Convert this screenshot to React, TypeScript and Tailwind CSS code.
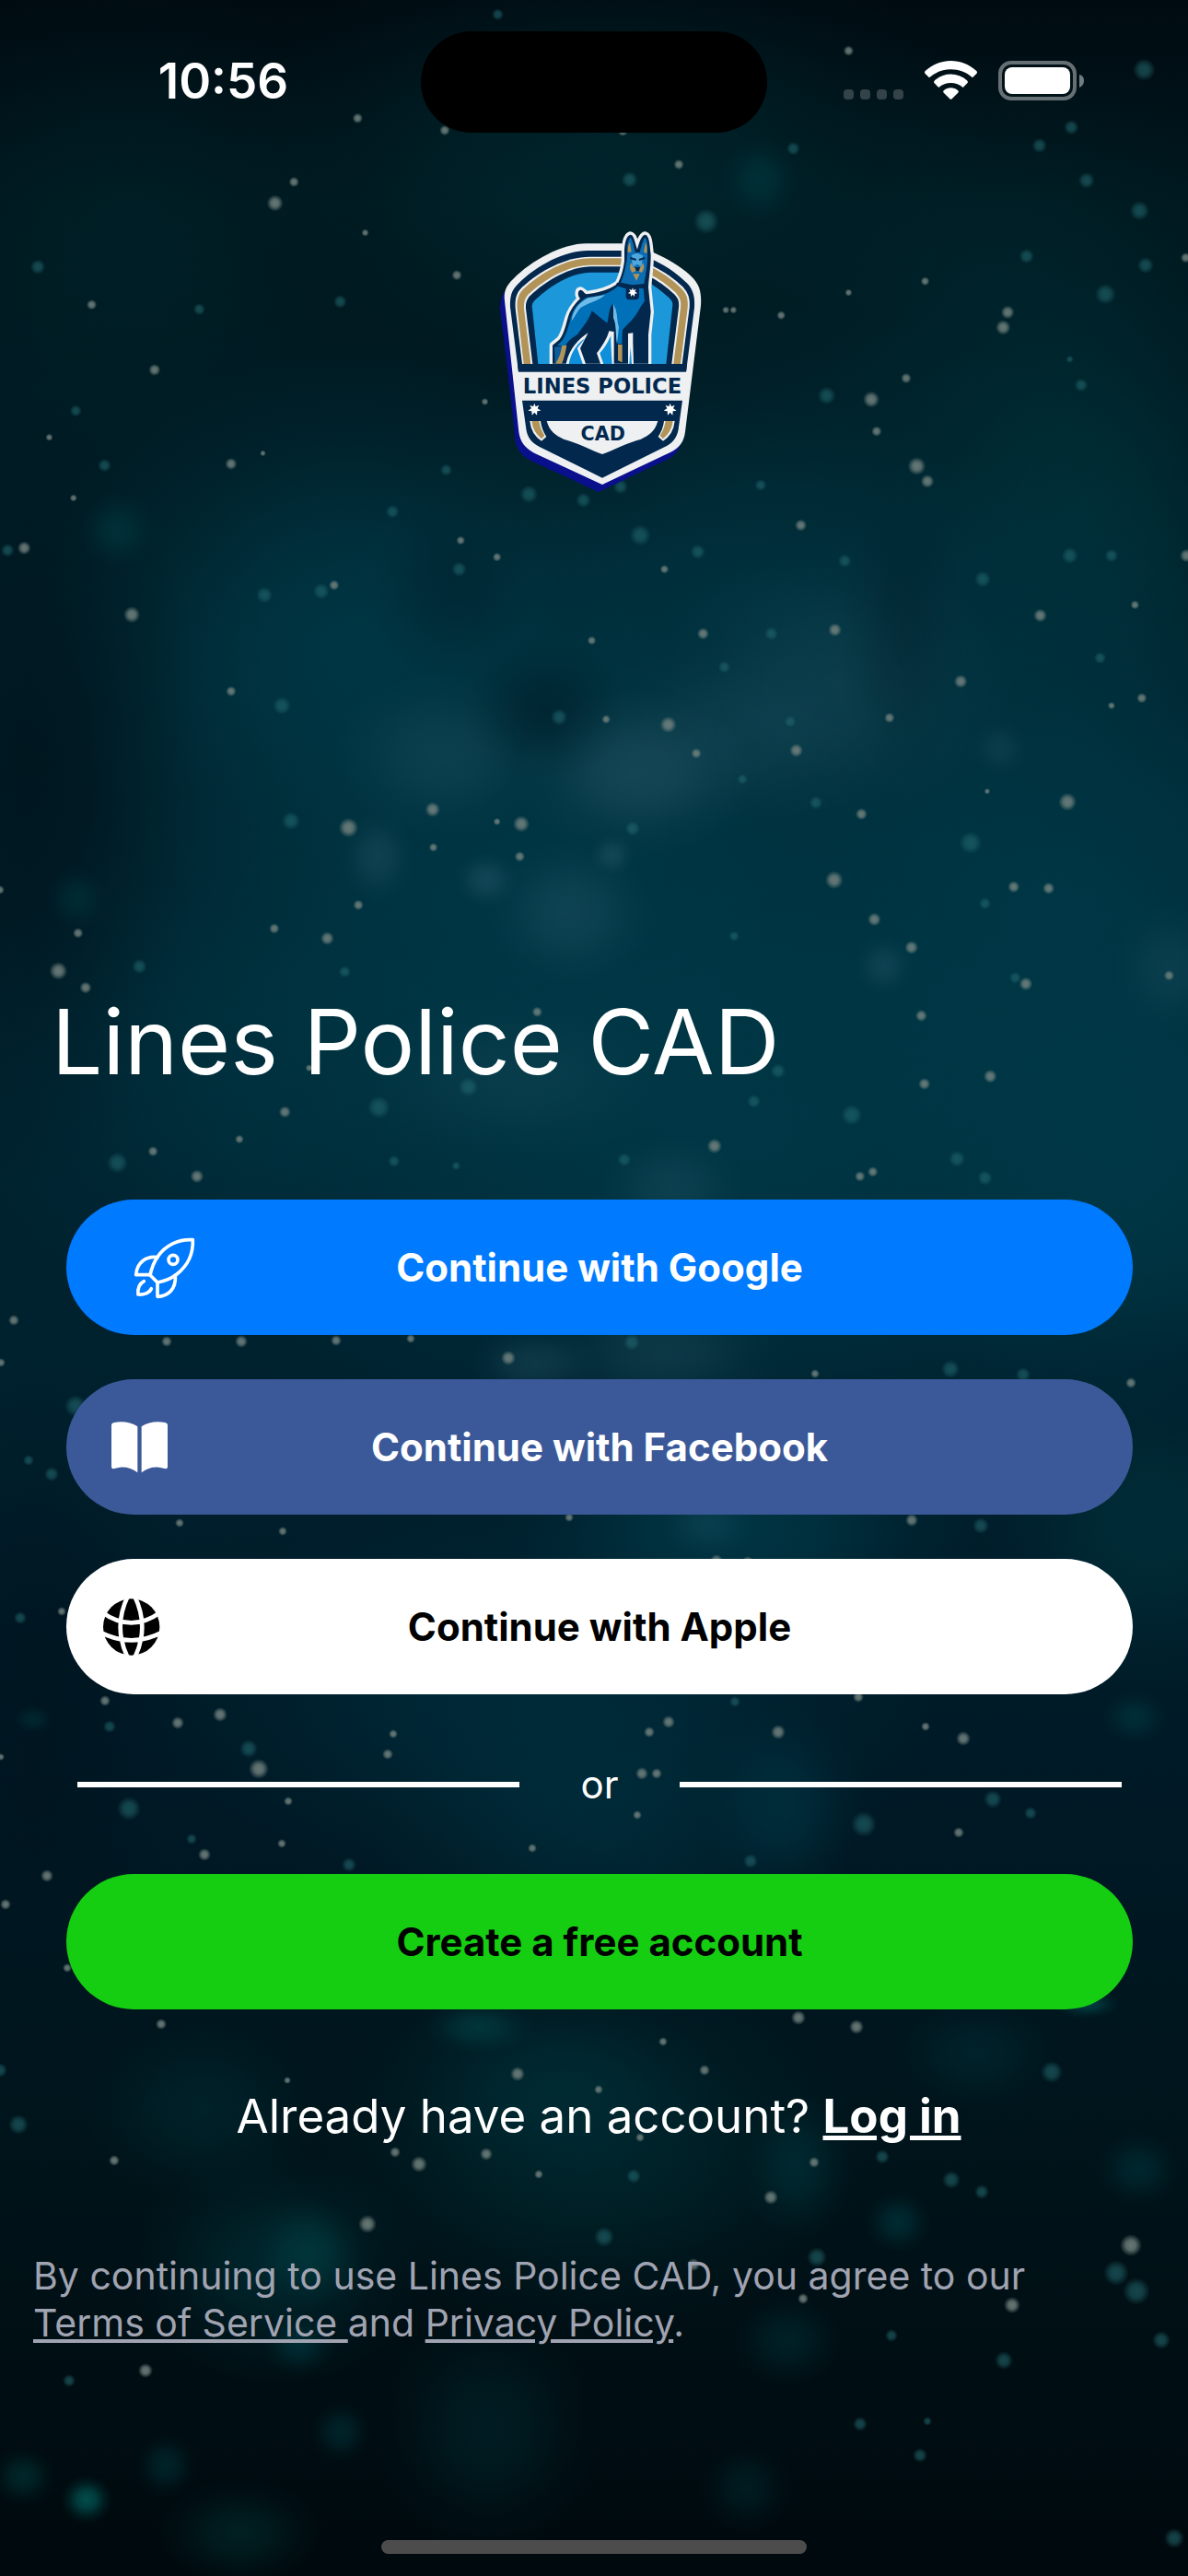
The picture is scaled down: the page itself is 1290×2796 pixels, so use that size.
import type { ReactNode } from "react";

type Blob = [x: number, y: number, rx: number, ry: number, tone: string, opacity: number];
type Star = [x: number, y: number, r: number, tone?: "t" | "w"];

/* Soft clouds of the night sky, in a 1290 x 2796 field. */
const clouds: Blob[] = [
  [660, 170, 420, 240, "teal", 0.4],
  [140, 230, 260, 260, "teal", 0.2],
  [1090, 330, 300, 280, "teal", 0.3],
  [380, 700, 340, 320, "blue", 0.8],
  [840, 660, 460, 330, "blue", 0.65],
  [1180, 560, 220, 260, "teal", 0.5],
  [1150, 980, 460, 480, "blue", 0.85],
  [600, 980, 560, 440, "blue", 0.85],
  [260, 1150, 340, 300, "blue", 0.45],
  [800, 1240, 660, 400, "blue", 0.8],
  [1230, 1250, 300, 320, "blue", 0.8],
  [910, 740, 190, 150, "mist", 0.25],
  [690, 840, 130, 90, "mist", 0.45],
  [790, 800, 180, 100, "mist", 0.22],
  [480, 820, 120, 90, "mist", 0.3],
  [410, 930, 40, 50, "mist", 0.35],
  [620, 990, 90, 80, "mist", 0.35],
  [528, 955, 34, 30, "mist", 0.45],
  [665, 928, 24, 22, "mist", 0.45],
  [960, 1048, 32, 32, "mist", 0.35],
  [560, 1170, 180, 90, "mist", 0.2],
  [730, 1290, 80, 60, "mist", 0.3],
  [580, 1480, 70, 40, "mist", 0.35],
  [720, 1470, 130, 70, "mist", 0.3],
  [770, 1655, 50, 35, "mist", 0.7],
  [800, 1660, 260, 140, "blue", 0.8],
  [1250, 1660, 180, 180, "teal", 0.5],
  [600, 1850, 420, 240, "blue", 0.5],
  [850, 1960, 90, 110, "blue", 0.5],
  [660, 2000, 260, 160, "blue", 0.35],
  [590, 770, 90, 80, "dark", 0.35],
  [980, 690, 70, 160, "dark", 0.25],
  [490, 640, 90, 100, "dark", 0.25],
  [30, 850, 190, 440, "dark", 0.6],
  [40, 1850, 160, 360, "dark", 0.5],
  [640, 2330, 300, 200, "teal", 0.45],
  [520, 2200, 60, 30, "glow", 0.5],
  [600, 2260, 180, 110, "teal", 0.35],
  [220, 2290, 130, 100, "teal", 0.35],
  [335, 2445, 60, 60, "glow", 0.5],
  [300, 2460, 160, 130, "teal", 0.5],
  [325, 2545, 40, 34, "teal", 0.6],
  [865, 2350, 60, 80, "teal", 0.5],
  [975, 2412, 36, 34, "teal", 0.6],
  [855, 2540, 60, 50, "teal", 0.4],
  [1236, 2354, 46, 40, "teal", 0.5],
  [1060, 2230, 90, 60, "teal", 0.35],
  [1180, 2175, 36, 16, "glow", 0.7],
  [530, 2640, 120, 130, "teal", 0.35],
  [370, 2640, 34, 34, "teal", 0.5],
  [180, 2676, 34, 36, "teal", 0.5],
  [25, 2688, 36, 32, "glow", 0.4],
  [94, 2713, 28, 26, "glow", 0.95],
  [260, 2750, 90, 60, "glow", 0.3],
  [810, 2700, 50, 50, "teal", 0.35],
  [128, 575, 42, 42, "teal", 0.6],
  [84, 975, 34, 34, "teal", 0.5],
  [825, 195, 42, 46, "teal", 0.6],
  [1086, 812, 30, 30, "mist", 0.25],
  [1270, 1050, 60, 70, "mist", 0.25],
  [36, 1866, 22, 16, "glow", 0.3],
  [1232, 1864, 36, 30, "teal", 0.6],
];

/* Stars of the upper half, plotted on a 1568-unit grid over 1290 px. */
const upperStars: Star[] = [
  [657, 19, 8, "t"], [1120, 67, 7], [472, 156, 7], [587, 172, 7], [822, 173, 7], [388, 240, 7], [363, 268, 11],
  [896, 217, 7], [1047, 196, 9, "t"], [1414, 168, 10, "t"], [1372, 192, 10, "t"], [1434, 238, 11, "t"],
  [1504, 278, 13, "t"], [1510, 92, 15, "t"], [1355, 338, 10, "t"], [1512, 350, 11, "t"], [1459, 388, 14, "t"],
  [1565, 340, 7], [1221, 371, 6], [1120, 386, 5], [1330, 412, 9], [1324, 432, 10], [1031, 416, 6], [958, 409, 5],
  [968, 409, 5], [603, 363, 7], [482, 307, 5], [449, 398, 9, "t"], [263, 408, 8, "t"], [121, 402, 7], [204, 488, 8],
  [50, 352, 10, "t"], [932, 292, 17, "t"], [831, 237, 11, "t"], [1196, 499, 7], [1091, 522, 12, "t"], [1150, 527, 11],
  [1157, 569, 7], [1210, 615, 12], [1224, 635, 9], [1427, 508, 9, "t"], [1412, 474, 5, "t"], [640, 530, 5],
  [1004, 640, 8, "t"], [1057, 693, 8], [305, 612, 8], [347, 598, 4], [97, 657, 5], [65, 577, 5], [100, 542, 8, "t"],
  [138, 614, 9, "t"], [589, 620, 8, "t"], [770, 660, 10, "t"], [819, 642, 10, "t"], [698, 652, 12, "t"],
  [518, 675, 9, "t"], [845, 706, 14, "t"], [921, 728, 10, "t"], [608, 713, 6], [606, 751, 10, "t"], [656, 735, 6],
  [877, 751, 6], [32, 723, 9], [10, 726, 9, "t"], [424, 780, 11, "t"], [441, 772, 7], [349, 785, 11, "t"],
  [174, 811, 11], [1115, 740, 9, "t"], [1297, 764, 11, "t"], [1412, 733, 11, "t"], [1467, 733, 9, "t"], [1566, 733, 9],
  [1498, 798, 6], [1373, 812, 9], [1102, 831, 9], [1018, 836, 9, "t"], [928, 836, 8], [781, 845, 6], [1452, 868, 8, "t"],
  [1268, 899, 9], [956, 880, 8, "t"], [1507, 921, 7], [1467, 931, 5], [1174, 947, 7], [1043, 952, 8, "t"],
  [882, 956, 11], [800, 949, 6], [738, 946, 11, "t"], [305, 912, 7], [372, 931, 12, "t"], [1051, 990, 9],
  [919, 994, 7], [980, 1028, 7, "t"], [1303, 1044, 4], [1409, 1058, 12], [1137, 1074, 8], [1077, 1059, 9, "t"],
  [1281, 1112, 15, "t"], [571, 1068, 10], [688, 1087, 11], [656, 1084, 5], [460, 1092, 13], [384, 1083, 12, "t"],
  [572, 1118, 6], [686, 1130, 7], [835, 1093, 10, "t"], [1101, 1161, 12], [1338, 1170, 8], [1384, 1172, 8],
  [1300, 1192, 8, "t"], [1154, 1213, 9], [1203, 1250, 9], [473, 1194, 7], [362, 1225, 7], [432, 1238, 9],
  [969, 1235, 7, "t"], [103, 1231, 7], [77, 1281, 12], [113, 1303, 8], [184, 1275, 10, "t"], [455, 1282, 8, "t"],
  [1354, 1298, 9], [1543, 1287, 7], [1216, 1340, 8], [1307, 1420, 9], [1220, 1430, 8], [709, 1335, 7], [408, 1409, 5],
  [1027, 1413, 10, "t"], [995, 1453, 9, "t"], [1124, 1471, 14, "t"], [618, 1434, 13, "t"], [376, 1467, 8],
  [500, 1461, 15, "t"], [943, 1512, 10], [824, 1530, 9, "t"], [202, 1519, 7], [316, 1503, 6], [260, 1552, 9],
  [520, 1532, 8, "t"], [602, 1538, 6, "t"], [1263, 1529, 11, "t"], [1152, 1546, 7], [1135, 1552, 7], [1300, 1554, 10, "t"],
  [155, 1534, 14, "t"], [1340, 1290, 8, "t"], [0, 1174, 6],
];

/* Stars of the lower half: full-page coordinates. */
const lowerStars: Star[] = [
  [15, 1433, 6], [1, 1479, 5], [181, 1456, 6], [262, 1456, 7], [365, 1455, 6], [446, 1453, 5], [552, 1474, 8],
  [686, 1457, 9, "t"], [885, 1491, 5], [1032, 1486, 10, "t"], [1111, 1492, 8, "t"], [1228, 1501, 6], [31, 1585, 6, "t"],
  [56, 1600, 8, "t"], [82, 1526, 12, "t"], [195, 1653, 5], [307, 1662, 5], [618, 1647, 5], [990, 1650, 7],
  [1065, 1656, 9, "t"], [778, 1694, 7], [812, 1695, 6], [67, 1749, 5], [22, 1756, 7, "t"], [114, 1846, 6],
  [119, 1874, 7, "t"], [193, 1870, 7], [239, 1861, 8], [270, 1898, 10, "t"], [281, 1920, 11], [427, 1882, 5],
  [421, 1904, 6], [726, 1869, 7], [705, 1880, 6], [845, 1880, 8], [932, 1842, 6], [798, 1847, 6, "t"],
  [1046, 1887, 8], [1005, 1874, 5], [697, 1925, 7], [713, 1925, 6], [692, 1970, 5], [1, 1907, 4], [313, 1955, 5],
  [140, 1963, 13, "t"], [208, 1996, 6, "t"], [222, 2013, 7], [306, 2001, 5], [379, 2024, 8, "t"], [51, 2036, 7],
  [6, 2067, 6], [1041, 1989, 6], [1078, 1953, 10, "t"], [1119, 1968, 7, "t"], [938, 1980, 14, "t"], [815, 2020, 8, "t"],
  [578, 2006, 5], [73, 2136, 5], [175, 2197, 6], [867, 2190, 8], [930, 2200, 8], [720, 2216, 5], [765, 2247, 6],
  [562, 2251, 8], [650, 2268, 5], [312, 2258, 4], [1142, 2249, 12, "t"], [0, 2247, 8, "t"], [20, 2306, 11, "t"],
  [124, 2345, 6], [429, 2336, 6], [455, 2349, 9], [528, 2338, 7], [585, 2360, 5], [695, 2320, 5], [688, 2362, 8, "t"],
  [884, 2347, 6], [958, 2341, 8, "t"], [1033, 2366, 10, "t"], [1066, 2379, 8, "t"], [837, 2385, 8], [399, 2414, 10],
  [656, 2428, 11, "t"], [753, 2458, 7], [887, 2450, 11, "t"], [872, 2495, 6], [1228, 2437, 12], [1212, 2467, 14, "t"],
  [1234, 2487, 15, "t"], [1099, 2502, 9], [968, 2535, 7, "t"], [1261, 2540, 10, "t"], [1090, 2562, 10, "t"],
  [158, 2573, 8], [75, 2584, 7, "t"], [934, 2631, 8, "t"], [1007, 2628, 5, "t"], [999, 2665, 8, "t"], [1275, 2755, 11, "t"],
];

const cloudTones: [id: string, color: string][] = [
  ["teal", "#003a42"],
  ["blue", "#003a49"],
  ["mist", "#2a5a6b"],
  ["glow", "#02504f"],
  ["dark", "#001019"],
];

const starTones: [id: string, color: string][] = [
  ["w", "#72827e"],
  ["t", "#236a70"],
];

function StarDot({ star: [x, y, r, tone = "w"] }: { star: Star }) {
  return <circle cx={x} cy={y} r={r} fill={`url(#tone-${tone})`} opacity={tone === "t" ? 0.6 : 0.9} />;
}

function NightSky() {
  return (
    <svg
      className="absolute inset-0 h-full w-full"
      viewBox="0 0 1290 2796"
      preserveAspectRatio="xMidYMid slice"
      aria-hidden="true"
    >
      <defs>
        <linearGradient id="sky" x1="0" y1="0" x2="0" y2="1">
          <stop offset="0" stopColor="#000b11" />
          <stop offset="0.08" stopColor="#00171e" />
          <stop offset="0.25" stopColor="#002029" />
          <stop offset="0.5" stopColor="#00222f" />
          <stop offset="0.68" stopColor="#001a27" />
          <stop offset="0.85" stopColor="#001319" />
          <stop offset="1" stopColor="#00090d" />
        </linearGradient>
        {cloudTones.map(([id, color]) => (
          <radialGradient id={`tone-${id}`} key={id}>
            <stop offset="0" stopColor={color} />
            <stop offset="0.35" stopColor={color} stopOpacity="0.75" />
            <stop offset="0.7" stopColor={color} stopOpacity="0.25" />
            <stop offset="1" stopColor={color} stopOpacity="0" />
          </radialGradient>
        ))}
        {starTones.map(([id, color]) => (
          <radialGradient id={`tone-${id}`} key={id}>
            <stop offset="0" stopColor={color} />
            <stop offset="0.45" stopColor={color} stopOpacity="0.85" />
            <stop offset="1" stopColor={color} stopOpacity="0" />
          </radialGradient>
        ))}
      </defs>
      <rect width="1290" height="2796" fill="url(#sky)" />
      {clouds.map(([x, y, rx, ry, tone, opacity], i) => (
        <ellipse key={i} cx={x} cy={y} rx={rx} ry={ry} fill={`url(#tone-${tone})`} opacity={opacity} />
      ))}
      <g transform="scale(0.8227)">
        {upperStars.map((star, i) => (
          <StarDot key={i} star={star} />
        ))}
      </g>
      {lowerStars.map((star, i) => (
        <StarDot key={i} star={star} />
      ))}
    </svg>
  );
}

const SHIELD =
  "M84 290C80 262 88 240 112 218C170 160 270 103 350 103H462C540 112 640 158 698 216C718 238 726 262 723 305L672 716C668 750 652 768 625 782L402 888L180 785C150 768 134 748 130 716Z";
const STAR = "M0-20L4-9L15-14L10-3L21 4L9 6L8 19L0 10L-8 19L-9 6L-21 4L-10-3L-15-14L-4-9Z";
const DOG =
  "M240 494V434L262 416C276 400 282 372 290 344C298 318 312 300 330 282C320 272 322 254 332 254C340 256 342 264 350 268C384 264 424 254 452 234C464 212 470 190 474 160L474 130C474 106 480 76 494 74C506 76 508 100 516 122C522 100 530 74 542 74C556 78 556 106 560 140C560 180 554 210 552 246L560 325L552 400V494H502V394L486 396V494H440V390L424 388C418 412 400 440 384 460L396 494H348L330 444L356 394C330 410 296 440 284 494Z";

function ShieldLogo() {
  return (
    <svg className="h-[320px] w-[260px]" viewBox="-15 0 780 960" role="img" aria-label="Lines Police CAD">
      <path d={SHIELD} transform="translate(-12 24)" fill="#0a0f8c" />
      <path d="M84 285L68 310L122 740L170 800L392 912L402 885Z" fill="#0a0f8c" />
      <path d={SHIELD} fill="#eef0f2" />
      {/* arched bands */}
      <path
        d="M129 521L102 310C101 275 106 255 126 236C190 172 280 126 356 126H462C540 134 622 176 680 234C700 256 704 280 702 312L675 521Z"
        fill="#02284e"
      />
      <path
        d="M141 495L119 315C117 285 121 265 140 246C200 190 285 146 362 146H462C530 152 612 192 664 244C684 266 688 284 686 312L662 495Z"
        fill="#eef0f2"
      />
      <path
        d="M146 495L125 315C123 288 127 270 144 252C204 196 288 151 362 151H462C530 158 606 196 660 250C678 268 682 286 680 312L657 495Z"
        fill="#b29459"
      />
      <path
        d="M169 495L147 315C146 296 149 282 162 268C216 216 296 173 364 173H462C524 180 590 214 640 262C656 280 659 292 657 312L634 495Z"
        fill="#eef0f2"
      />
      <path
        d="M175 495L153 315C152 298 155 287 166 274C220 222 298 178 366 178H462C520 186 586 220 636 268C650 282 653 294 651 312L628 495Z"
        fill="#02284e"
      />
      <path
        d="M193 495L173 306C174 297 178 292 186 284C236 238 300 198 366 197H470C520 206 572 236 618 278C628 288 632 294 631 304L610 495Z"
        fill="#1c98da"
      />
      {/* dog */}
      <path d={DOG} fill="#eef0f2" stroke="#eef0f2" strokeWidth="20" strokeLinejoin="round" />
      <path d="M293 495C302 450 326 424 346 412L320 444L338 495ZM394 460C408 444 420 426 428 408L434 495H406Z" fill="#0d8fdb" />
      <path d={DOG} fill="#02284e" />
      <path
        d="M254 434C280 420 290 380 298 350C306 316 322 296 352 278C400 274 430 262 452 242L536 246L540 290C524 310 514 340 488 362L468 384L466 430H452L436 300C424 310 424 340 418 362L368 322C360 350 340 372 322 398C300 412 290 420 282 436Z"
        fill="#0070b8"
      />
      <path d="M302 356C306 318 326 296 356 280L412 270C392 290 340 300 326 318ZM438 300L446 318C452 340 450 360 456 376L450 430C444 400 450 370 438 346Z" fill="#6fbbe8" />
      <path d="M246 440L284 434L272 494H248Z" fill="#0c5c9c" />
      <path d="M270 436L286 434C282 460 276 480 270 494H250C260 476 268 460 270 436ZM453 432H467V490L453 484Z" fill="#b29459" />
      <path d="M488 495L490 402Q494 392 500 402L504 495Z" fill="#eef0f2" />
      <path d="M490 495L494 440L498 495Z" fill="#1c98da" />
      <path
        d="M484 130C482 108 488 84 495 84C502 96 506 120 510 132H524C528 116 534 88 542 84C550 92 550 118 549 136C550 168 546 190 538 234L500 238L462 230C472 210 478 180 482 156Z"
        fill="#0d6db3"
      />
      <path d="M498 140L516 134L534 142L530 180L516 170L500 180Z" fill="#4fa6dc" />
      <path d="M485 132C485 116 488 104 492 100L497 130ZM537 130L543 100C548 108 548 124 547 136Z" fill="#b29459" />
      <path d="M493 150L512 156M522 156L541 150" stroke="#02284e" strokeWidth="6" />
      <path d="M496 166C490 176 492 190 500 198L516 190L530 198C538 190 540 176 534 166C530 180 526 184 516 184C506 184 500 180 496 166ZM502 202H524L513 224Z" fill="#b29459" />
      <path d="M508 180H525L522 192H512Z" fill="#02284e" />
      <path d="M450 230L500 242L538 240V250L522 248V276Q520 286 510 286H490Q480 286 479 276V250L446 240Z" fill="#02284e" />
      <path d={STAR} transform="translate(501 262) scale(0.75)" fill="#fff" />
      <path d="M126 495H678L675 521H129Z" fill="#02284e" />
      <path d="M129 521H675L672 548H132Z" fill="#eef0f2" />
      {/* name plate */}
      <text x="402" y="592" textAnchor="middle" fontFamily="DejaVu Sans, sans-serif" fontWeight="700" fontSize="68" fill="#02284e">
        LINES POLICE
      </text>
      <path
        d="M141 614H663L651 700C649 728 636 750 612 762L402 866L196 764C168 750 156 730 153 700Z"
        fill="#02284e"
      />
      <path d={STAR} transform="translate(181 643)" fill="#fff" />
      <path d={STAR} transform="translate(623 643)" fill="#fff" />
      <path d="M166 681H201Q204 708 220 732L204 746Q170 724 166 681ZM638 681H603Q600 708 584 732L600 746Q634 724 638 681Z" fill="#eef0f2" />
      <path d="M172 681H196Q200 708 214 728L204 739Q176 716 172 681ZM632 681H608Q604 708 590 728L600 739Q628 716 632 681Z" fill="#b29459" />
      <path d="M221 681H583C574 714 554 728 528 740C480 752 440 776 402 789C364 776 324 752 276 740C250 728 230 714 221 681Z" fill="#eef0f2" />
      <text x="404" y="744" textAnchor="middle" fontFamily="DejaVu Sans, sans-serif" fontWeight="700" fontSize="62" fill="#02284e">
        CAD
      </text>
    </svg>
  );
}

function RocketIcon() {
  return (
    <svg
      className="ml-[71px] size-[72px]"
      viewBox="129 27 216 216"
      fill="none"
      stroke="currentColor"
      strokeWidth="11"
      strokeLinecap="round"
      strokeLinejoin="round"
      aria-hidden="true"
    >
      <path d="M328 44C282 41 238 62 213 100C200 118 194 136 189 159L213 183C236 179 258 170 276 156C312 128 330 92 328 44Z" />
      <path d="M213 101C176 96 146 118 143 158H189" />
      <path d="M213 183V229C248 229 274 204 271 160" />
      <path d="M169 179C154 187 148 204 150 222C168 224 188 217 193 203" />
      <circle cx="264" cy="109" r="15" />
    </svg>
  );
}

function BookIcon() {
  return (
    <svg className="ml-[44px] size-[72px]" viewBox="48 612 216 216" fill="currentColor" aria-hidden="true">
      <path d="M63 648Q63 641 72 639C100 634 126 638 148 652V802C124 783 100 780 72 789Q63 791 63 784Z" />
      <path d="M246 648Q246 641 237 639C209 634 183 638 161 652V802C185 783 209 780 237 789Q246 791 246 784Z" />
    </svg>
  );
}

function GlobeIcon() {
  return (
    <svg className="ml-[35px] size-[72px]" viewBox="21 1198 216 216" aria-hidden="true">
      <circle cx="128" cy="1306" r="92" fill="#000" />
      <path
        d="M116 1206Q68 1306 116 1406M139 1206Q187 1306 139 1406M30 1256Q128 1328 225 1256M26 1323Q128 1375 229 1323"
        fill="none"
        stroke="#fff"
        strokeWidth="14"
      />
    </svg>
  );
}

function StatusBar() {
  return (
    <header className="grid h-[178px] grid-cols-[1fr_376px_1fr] items-start pt-[34px]">
      <time className="flex h-[108px] items-center justify-center pl-[28px] text-[53px] leading-none font-semibold">10:56</time>
      <div className="h-[110px] rounded-full bg-black" />
      <div className="flex h-[106px] items-center justify-end pr-[113px]">
        <div className="mr-[23px] flex gap-[7px] pt-[31px]">
          {[0, 1, 2, 3].map((i) => (
            <span key={i} className="size-[11px] rounded-[4px] bg-white/20" />
          ))}
        </div>
        <svg className="mr-[23px] h-[42px] w-[57px]" viewBox="0 0 171 126" fill="#fff" role="img" aria-label="Wi-Fi">
          <path d="M2 33C50-11 121-11 169 33Q173 38 169 42L156 55C117 19 54 19 15 55L2 42Q-2 38 2 33Z" />
          <path d="M33 64C63 37 108 37 138 64Q143 69 139 73L125 87C103 67 68 67 46 87L32 73Q28 69 33 64Z" />
          <path d="M63 96C76 85 95 85 108 96Q113 101 108 105L89 124Q86 127 82 124L63 105Q58 101 63 96Z" />
        </svg>
        <svg className="h-[43px] w-[93px]" viewBox="0 0 93 43" role="img" aria-label="Battery full">
          <rect x="2" y="2" width="81" height="39" rx="12" fill="none" stroke="#fff" strokeOpacity="0.4" strokeWidth="4" />
          <rect x="7" y="7" width="71" height="29" rx="8" fill="#fff" />
          <path d="M88 15Q93 16 93 21.500Q93 27 88 29Z" fill="#fff" fillOpacity="0.45" />
        </svg>
      </div>
    </header>
  );
}

function PillButton({ className, icon, children }: { className: string; icon?: ReactNode; children: ReactNode }) {
  return (
    <button
      type="button"
      className={`grid h-[147px] w-full grid-cols-[1fr_auto_1fr] items-center rounded-full text-[42px] font-bold ${className}`}
    >
      <span>{icon}</span>
      <span>{children}</span>
      <span />
    </button>
  );
}

export default function App() {
  return (
    <div className="relative flex min-h-screen flex-col overflow-hidden bg-[#00141c] font-[Inter,sans-serif] text-white">
      <NightSky />
      <div className="relative flex flex-1 flex-col">
        <StatusBar />
        <main className="flex flex-1 flex-col">
          <div className="mt-[52px] flex justify-center">
            <ShieldLogo />
          </div>
          <h1 className="mt-[517px] px-[56px] text-[98px] leading-[128px] font-normal">Lines Police CAD</h1>

          <div className="mt-[107px] flex flex-col gap-12 pr-[60px] pl-[72px]">
            <PillButton className="bg-[#007aff]" icon={<RocketIcon />}>
              Continue with Google
            </PillButton>
            <PillButton className="bg-[#3b5998]" icon={<BookIcon />}>
              Continue with Facebook
            </PillButton>
            <PillButton className="bg-white text-black" icon={<GlobeIcon />}>
              Continue with Apple
            </PillButton>
          </div>

          <div className="mt-[72px] flex h-[52px] items-center pr-[72px] pl-[84px]">
            <div className="h-[6px] flex-1 bg-white" />
            <span className="w-[174px] text-center text-[42px] leading-[52px]">or</span>
            <div className="h-[6px] flex-1 bg-white" />
          </div>

          <div className="mt-[71px] pr-[60px] pl-[72px]">
            <PillButton className="bg-[#15ce12] text-black">Create a free account</PillButton>
          </div>

          <p className="mt-[84px] pl-[10px] text-center text-[51px] leading-[64px]">
            Already have an account?{" "}
            <a href="#login" className="font-bold underline">
              Log in
            </a>
          </p>

          <p className="mt-[116px] max-w-[1180px] px-[36px] text-[41px] leading-[51px] text-[#a0a3b1]">
            By continuing to use Lines Police CAD, you agree to our{" "}
            <a href="#terms" className="whitespace-pre underline">
              {"Terms of Service "}
            </a>
            and{" "}
            <a href="#privacy" className="underline">
              Privacy Policy
            </a>
            .
          </p>
        </main>
        <div className="mb-[24px] h-[15px] w-[462px] self-center rounded-full bg-[#4c4c4c]" />
      </div>
    </div>
  );
}
